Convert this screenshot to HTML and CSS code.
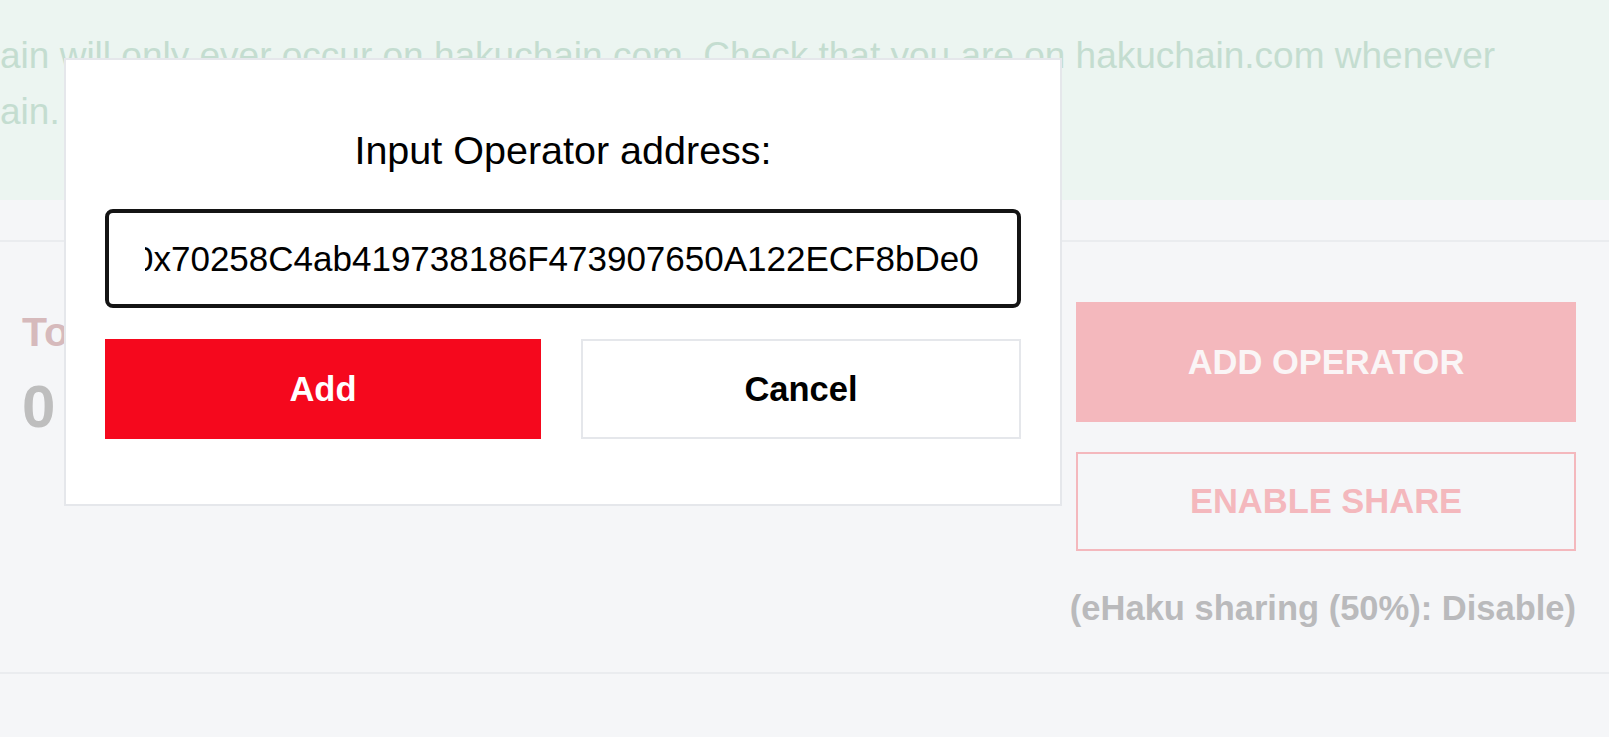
FILE: index.html
```html
<!DOCTYPE html>
<html lang="en">

<head>
    <meta charset="UTF-8">
    <meta name="viewport" content="width=device-width, initial-scale=1.0">
    <title>operators</title>
    <link rel="stylesheet" href="styles.css">
</head>

<body>

    <div class="page">
        <div class="notice">
            <p>ain will only ever occur on hakuchain.com. Check that you are on hakuchain.com whenever<br>ain.</p>
        </div>
        <div class="subnav"></div>
        <div class="panel">
            <div class="stats">
                <div class="stat-label">Total Operators</div>
                <div class="stat-value">0</div>
            </div>
            <div class="actions">
                <button class="btn-primary">ADD OPERATOR</button>
                <button class="btn-outline">ENABLE SHARE</button>
                <p class="share-status">(eHaku sharing (50%): Disable)</p>
            </div>
        </div>
    </div>

    <div class="modal">
        <p class="modal-title">Input Operator address:</p>
        <input class="modal-input" id="operator-address" type="text"
            value="0x70258C4ab419738186F473907650A122ECF8bDe0">
        <div class="modal-buttons">
            <button class="btn-add">Add</button>
            <button class="btn-cancel">Cancel</button>
        </div>
    </div>

    <script>
        var input = document.getElementById("operator-address");
        input.focus();
        input.setSelectionRange(input.value.length, input.value.length);
        input.scrollLeft = input.scrollWidth;
    </script>
</body>

</html>
```

FILE: styles.css
```css
html,
body {
    margin: 0;
    height: 100%;
}

body {
    background-color: rgb(245, 246, 248);
    font-family: "Liberation Sans", Arial, sans-serif;
    overflow: hidden;
}

.notice {
    background-color: rgb(236, 245, 241);
    padding: 28px 0 60px;
}

.notice p {
    margin: 0;
    font-size: 37px;
    line-height: 56px;
    color: rgb(196, 221, 208);
    white-space: nowrap;
}

.subnav {
    height: 40px;
    border-bottom: 2px solid rgb(234, 236, 239);
}

.panel {
    display: flex;
    justify-content: space-between;
    height: 430px;
    padding: 0 33px 0 22px;
    border-bottom: 2px solid rgb(234, 236, 239);
}

.stats {
    padding-top: 67px;
}

.stat-label {
    font-size: 41px;
    line-height: 47px;
    font-weight: bold;
    color: rgb(214, 186, 188);
}

.stat-value {
    margin-top: 16px;
    font-size: 60px;
    line-height: 70px;
    font-weight: bold;
    color: rgb(190, 190, 190);
}

.actions {
    width: 500px;
    padding-top: 60px;
    display: flex;
    flex-direction: column;
}

.btn-primary,
.btn-outline,
.btn-add,
.btn-cancel {
    font-family: "Liberation Sans", Arial, sans-serif;
    font-size: 34.5px;
    font-weight: bold;
    padding: 0;
    cursor: pointer;
}

.btn-primary {
    height: 120px;
    border: 0;
    background-color: rgb(244, 184, 189);
    color: rgb(250, 245, 246);
}

.btn-outline {
    height: 99px;
    margin-top: 30px;
    border: 2px solid rgb(244, 184, 189);
    background-color: transparent;
    color: rgb(244, 184, 189);
}

.share-status {
    align-self: flex-end;
    margin: 37px 0 0;
    white-space: nowrap;
    font-size: 34.5px;
    line-height: 40px;
    font-weight: bold;
    color: rgb(186, 186, 188);
}

.modal {
    position: absolute;
    left: 64px;
    top: 58px;
    width: 998px;
    box-sizing: border-box;
    padding: 67px 39px 65px;
    background-color: white;
    border: 2px solid rgb(229, 231, 235);
}

.modal-title {
    margin: 0;
    text-align: center;
    font-size: 39.5px;
    line-height: 46px;
    color: black;
}

.modal-input {
    display: block;
    width: 100%;
    height: 99px;
    box-sizing: border-box;
    margin-top: 36px;
    padding: 0 38px 0 36px;
    border: 4px solid rgb(20, 20, 20);
    border-radius: 8px;
    font-family: "Liberation Sans", Arial, sans-serif;
    font-size: 35px;
    color: black;
    outline: 0;
}

.modal-buttons {
    display: flex;
    gap: 40px;
    margin-top: 31px;
}

.btn-add,
.btn-cancel {
    flex: 1;
    height: 100px;
}

.btn-add {
    border: 0;
    background-color: rgb(245, 8, 29);
    color: white;
}

.btn-cancel {
    border: 2px solid rgb(229, 231, 235);
    background-color: white;
    color: black;
}
```
